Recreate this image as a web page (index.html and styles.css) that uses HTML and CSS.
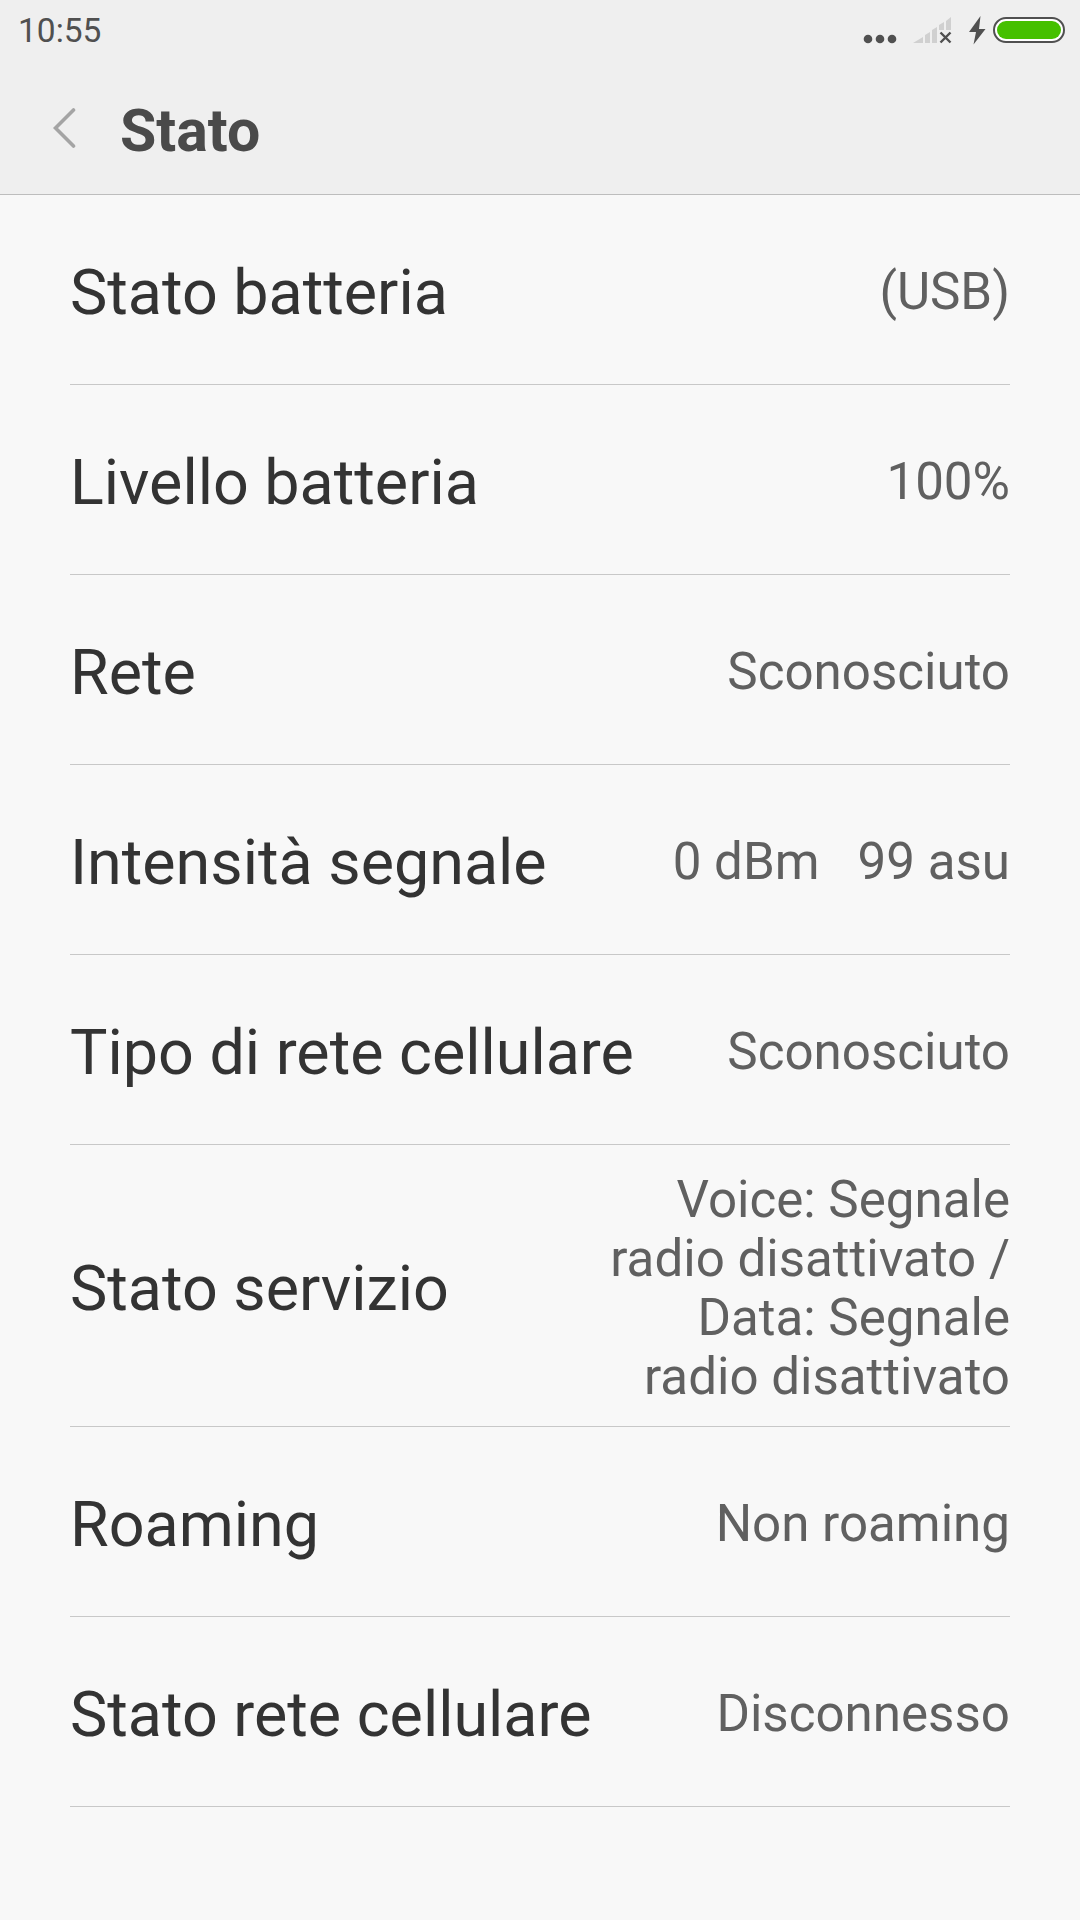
FILE: index.html
```html
<!DOCTYPE html>
<html lang="it">
<head>
  <meta charset="UTF-8">
  <title>Stato</title>
  <link rel="stylesheet" href="styles.css">
</head>
<body>

  <header class="header">
    <div class="statusbar">
      <span class="ora">10:55</span>
      <svg class="icone" width="220" height="60" viewBox="0 0 220 60">
        <g fill="#505050">
          <circle cx="8" cy="39" r="4.3"/>
          <circle cx="20" cy="39" r="4.3"/>
          <circle cx="32" cy="39" r="4.3"/>
        </g>
        <g fill="#d0d0d0">
          <path d="M53 43l10-6v6z"/>
          <path d="M65 43v-8l5-3v11z"/>
          <path d="M72 43V30l5-3v16z"/>
          <path d="M79 30v-5l5-3v8z"/>
          <path d="M86 30v-9l5-4v13z"/>
        </g>
        <path d="M80.500 32.500l10 10M90.500 32.500l-10 10" stroke="#505050" stroke-width="2.4"/>
        <path d="M120.500 16L109 32h7l-2.500 12.500L125.500 29h-6.500z" fill="#505050"/>
        <rect x="134" y="18" width="70" height="24" rx="12" fill="#fff" stroke="#505050" stroke-width="2"/>
        <rect x="137" y="21" width="64" height="18" rx="9" fill="#45c000"/>
      </svg>
    </div>
    <div class="titolo">
      <svg class="indietro" width="24" height="40" viewBox="0 0 24 40">
        <path d="M20.500 2L2.500 20l18 18" fill="none" stroke="#a4a4a4" stroke-width="3.600" stroke-linecap="round"/>
      </svg>
      <h1>Stato</h1>
    </div>
  </header>

  <main class="lista">
    <div class="riga">
      <span class="nome">Stato batteria</span>
      <span class="valore">(USB)</span>
    </div>
    <div class="riga">
      <span class="nome">Livello batteria</span>
      <span class="valore">100%</span>
    </div>
    <div class="riga">
      <span class="nome">Rete</span>
      <span class="valore">Sconosciuto</span>
    </div>
    <div class="riga">
      <span class="nome">Intensità segnale</span>
      <span class="valore">0 dBm   99 asu</span>
    </div>
    <div class="riga">
      <span class="nome">Tipo di rete cellulare</span>
      <span class="valore">Sconosciuto</span>
    </div>
    <div class="riga servizio">
      <span class="nome">Stato servizio</span>
      <span class="valore">Voice: Segnale
radio disattivato /
Data: Segnale
radio disattivato</span>
    </div>
    <div class="riga">
      <span class="nome">Roaming</span>
      <span class="valore">Non roaming</span>
    </div>
    <div class="riga">
      <span class="nome">Stato rete cellulare</span>
      <span class="valore">Disconnesso</span>
    </div>
  </main>

</body>
</html>
```
FILE: styles.css
```css
body {
  margin: 0;
  min-height: 1920px;
  background-color: #f8f8f8;
  font-family: Roboto, sans-serif;
}

.header {
  box-sizing: border-box;
  height: 195px;
  background-color: #efefef;
  border-bottom: 1px solid #bdbdbd;
}

.statusbar {
  display: flex;
  justify-content: space-between;
  height: 60px;
  padding-left: 18px;
}

.ora {
  font-size: 33.5px;
  line-height: 61px;
  color: #505050;
}

.titolo {
  display: flex;
  align-items: center;
  height: 136px;
  padding-left: 53px;
}

.indietro {
  margin-bottom: 1px;
}

h1 {
  margin: 5px 0 0 43px;
  font-size: 59px;
  font-weight: bold;
  color: #4a4a4a;
}

.lista {
  padding: 0 70px;
}

.riga {
  box-sizing: border-box;
  display: flex;
  justify-content: space-between;
  align-items: center;
  height: 190px;
  padding-top: 6px;
  border-bottom: 1px solid #c8c8c8;
}

.servizio {
  height: 282px;
}

.nome {
  font-size: 62.8px;
  color: #333333;
}

.valore {
  margin-bottom: 2px;
  font-size: 51.1px;
  line-height: 59px;
  color: #606060;
  text-align: right;
  white-space: pre;
}
```
